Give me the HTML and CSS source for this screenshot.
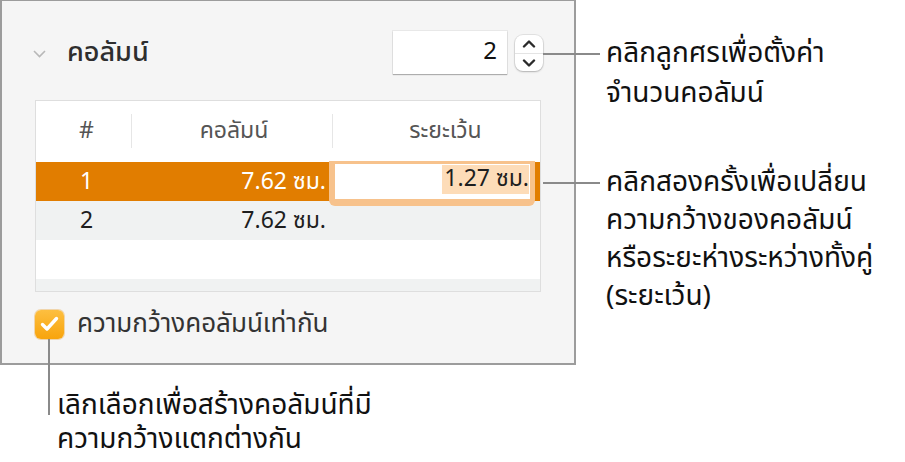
FILE: index.html
```html
<!DOCTYPE html>
<html lang="th">
<head>
    <meta charset="UTF-8">
    <meta name="viewport" content="width=device-width, initial-scale=1.0">
    <title>คอลัมน์</title>
    <link rel="stylesheet" href="styles.css">
</head>
<body>
<div class="figure">
    <div class="panel">
        <div class="panel-head">
            <span class="chevron">
                <svg width="13" height="8" viewBox="0 0 13 8"><polyline points="1,1 6.5,6.5 12,1" fill="none" stroke="#b8b8b8" stroke-width="1.6"/></svg>
            </span>
            <span class="panel-title">คอลัมน์</span>
            <div class="count">
                <div class="count-field">2</div>
                <div class="stepper">
                    <svg class="arrow" width="14" height="9" viewBox="0 0 14 9"><polyline points="2,7.5 7,2.5 12,7.5" fill="none" stroke="#2b2b2b" stroke-width="2.4" stroke-linecap="round" stroke-linejoin="round"/></svg>
                    <span class="stepper-line"></span>
                    <svg class="arrow" width="14" height="9" viewBox="0 0 14 9"><polyline points="2,1.5 7,6.5 12,1.5" fill="none" stroke="#2b2b2b" stroke-width="2.4" stroke-linecap="round" stroke-linejoin="round"/></svg>
                </div>
            </div>
        </div>

        <div class="col-table">
            <div class="col-row col-header">
                <div class="cell c-num">#</div>
                <div class="cell c-width">คอลัมน์</div>
                <div class="cell c-gap">ระยะเว้น</div>
            </div>
            <div class="col-row is-selected">
                <div class="cell c-num">1</div>
                <div class="cell c-width">7.62 ซม.</div>
                <div class="cell c-gap">
                    <div class="edit-field">
                        <div class="edit-inner"><span class="edit-text">1.27 ซม.</span></div>
                    </div>
                </div>
            </div>
            <div class="col-row is-alt">
                <div class="cell c-num">2</div>
                <div class="cell c-width">7.62 ซม.</div>
                <div class="cell c-gap"></div>
            </div>
            <div class="col-row"></div>
            <div class="col-row is-alt"></div>
        </div>

        <div class="check-row">
            <span class="checkbox">
                <svg width="19" height="16" viewBox="0 0 19 16"><polyline points="2.5,8.5 7,13 16.5,2.5" fill="none" stroke="#fff" stroke-width="3.4" stroke-linecap="round" stroke-linejoin="round"/></svg>
            </span>
            <span class="check-label">ความกว้างคอลัมน์เท่ากัน</span>
        </div>
    </div>

    <div class="notes">
        <p class="note note-stepper">คลิกลูกศรเพื่อตั้งค่า<br>จำนวนคอลัมน์</p>
        <p class="note note-cell">คลิกสองครั้งเพื่อเปลี่ยน<br>ความกว้างของคอลัมน์<br>หรือระยะห่างระหว่างทั้งคู่<br>(ระยะเว้น)</p>
    </div>

    <p class="note note-check">เลิกเลือกเพื่อสร้างคอลัมน์ที่มี<br>ความกว้างแตกต่างกัน</p>
</div>
</body>
</html>
```

FILE: styles.css
```css
body {
    margin: 0;
    background: #fff;
    font-family: "Noto Sans Thai", "Noto Sans", "Liberation Sans", sans-serif;
    color: #1e1e1e;
}
.figure {
    display: grid;
    grid-template-columns: 576px 1fr;
    grid-template-rows: 365px auto;
    width: 905px;
    height: 462px;
}

/* inspector panel */
.panel {
    box-sizing: border-box;
    background: #f5f5f5;
    border: 2px solid #9c9c9c;
    border-top-width: 1px;
    padding: 30px 33px 0 33px;
}
.panel-head {
    display: flex;
    align-items: center;
    height: 43px;
}
.chevron {
    display: flex;
    margin-left: -2px;
    margin-top: 2px;
}
.panel-title {
    margin-left: 21px;
    font-size: 27px;
    line-height: 43px;
    font-weight: 500;
    color: #2e2e2e;
}
.count {
    margin-left: auto;
    margin-right: -2px;
    display: flex;
    align-items: center;
    gap: 8px;
}
.count-field {
    width: 114px;
    height: 43px;
    box-sizing: border-box;
    background: #fff;
    box-shadow: 0 0 0 1px rgba(0, 0, 0, 0.05), 0 1px 1px rgba(0, 0, 0, 0.25);
    text-align: right;
    padding-right: 10px;
    font-size: 24px;
    line-height: 43px;
    color: #111;
}
.stepper {
    width: 28px;
    height: 36px;
    background: #fff;
    border-radius: 8px;
    box-shadow: 0 0 0 1px rgba(0, 0, 0, 0.07), 0 1px 2px rgba(0, 0, 0, 0.22);
    display: flex;
    flex-direction: column;
    align-items: center;
    justify-content: space-between;
    padding: 4px 0 3px;
    box-sizing: border-box;
}
.stepper-line {
    width: 100%;
    height: 1px;
    background: #e4e4e4;
}

/* column table */
.col-table {
    margin-top: 26px;
    height: 192px;
    box-sizing: border-box;
    border: 1px solid #dedede;
    background: #fff;
    overflow: hidden;
}
.col-row {
    display: flex;
    height: 39px;
    align-items: center;
    font-size: 23px;
    line-height: 30px;
}
.col-row.is-alt {
    background: #f0f2f2;
}
.col-header {
    height: 60px;
    color: #555;
    font-size: 23px;
}
.cell {
    box-sizing: border-box;
    position: relative;
}
.c-num {
    width: 95px;
    text-align: center;
    padding-left: 6px;
}
.c-width {
    width: 202px;
    text-align: right;
    padding-right: 7px;
}
.c-gap {
    flex: 1;
    height: 100%;
}
.col-header .cell {
    height: 34px;
    line-height: 34px;
}
.col-header .c-width {
    text-align: center;
    padding-right: 0;
    padding-left: 4px;
    border-left: 1px solid #e6e6e6;
    border-right: 1px solid #e6e6e6;
}
.col-header .c-gap {
    text-align: center;
    padding-left: 18px;
}
.is-selected {
    background: #e17d00;
    color: #fff;
    margin-top: 1px;
}

/* cell being edited, spills over the row edges */
.edit-field {
    position: absolute;
    left: -4px;
    right: 5px;
    top: -1px;
    bottom: -5px;
    background: #f7c28c;
    padding: 3px 5px 7px 6px;
    border-radius: 0 0 6px 6px;
    box-sizing: border-box;
}
.edit-inner {
    height: 100%;
    background: #fff;
    text-align: right;
    padding-right: 1px;
    color: #1e1e1e;
}
.edit-text {
    display: inline-block;
    background: #fddcb8;
    line-height: 29px;
    padding-left: 2px;
}

/* checkbox */
.check-row {
    display: flex;
    align-items: center;
    gap: 13px;
    margin-top: 17px;
}
.checkbox {
    width: 29px;
    height: 29px;
    border-radius: 6px;
    background: linear-gradient(#fdbf40, #f8a40c);
    box-shadow: 0 0 0 1px rgba(230, 140, 0, 0.3);
    display: flex;
    align-items: center;
    justify-content: center;
}
.check-label {
    font-size: 26px;
    line-height: 30px;
    color: #333;
}

/* callouts */
.notes {
    padding-left: 30px;
}
.note {
    position: relative;
    margin: 0;
    font-size: 28px;
    line-height: 38px;
    white-space: nowrap;
    color: #111;
}
.note-stepper {
    margin-top: 34px;
    line-height: 40px;
}
.note-cell {
    margin-top: 50px;
}
.note-stepper::before,
.note-cell::before {
    content: "";
    position: absolute;
    left: -63px;
    top: 18px;
    width: 57px;
    height: 2px;
    background: #8a8a8a;
}
.note-stepper::before {
    top: 19px;
}
.note-check {
    grid-column: 1 / 3;
    margin-top: 24px;
    padding-left: 57px;
    line-height: 34px;
}
.note-check::before {
    content: "";
    position: absolute;
    left: 48px;
    top: -50px;
    width: 2px;
    height: 76px;
    background: #8a8a8a;
}
```
